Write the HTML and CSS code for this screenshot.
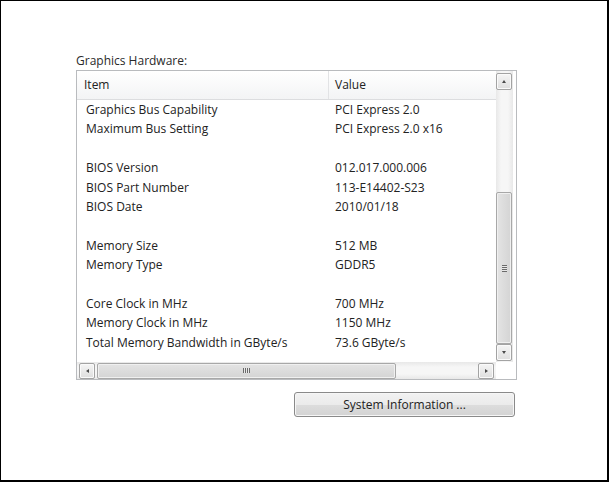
FILE: index.html
```html
<!DOCTYPE html>
<html>
<head>
<meta charset="utf-8">
<link rel="stylesheet" href="styles.css">
</head>
<body>
<div class="frame">
  <div class="group">
    <div class="heading">Graphics Hardware:</div>
    <div class="listbox">
      <div class="list">
        <div class="header">
          <div class="hcell c1">Item</div>
          <div class="hcell c2">Value</div>
          <div class="hcell c3"></div>
        </div>
        <div class="rows">
          <div class="row"><span class="c1">Graphics Bus Capability</span><span class="c2">PCI Express 2.0</span></div>
          <div class="row"><span class="c1">Maximum Bus Setting</span><span class="c2">PCI Express 2.0 x16</span></div>
          <div class="row"><span class="c1"></span><span class="c2"></span></div>
          <div class="row"><span class="c1">BIOS Version</span><span class="c2">012.017.000.006</span></div>
          <div class="row"><span class="c1">BIOS Part Number</span><span class="c2">113-E14402-S23</span></div>
          <div class="row"><span class="c1">BIOS Date</span><span class="c2">2010/01/18</span></div>
          <div class="row"><span class="c1"></span><span class="c2"></span></div>
          <div class="row"><span class="c1">Memory Size</span><span class="c2">512 MB</span></div>
          <div class="row"><span class="c1">Memory Type</span><span class="c2">GDDR5</span></div>
          <div class="row"><span class="c1"></span><span class="c2"></span></div>
          <div class="row"><span class="c1">Core Clock in MHz</span><span class="c2">700 MHz</span></div>
          <div class="row"><span class="c1">Memory Clock in MHz</span><span class="c2">1150 MHz</span></div>
          <div class="row"><span class="c1">Total Memory Bandwidth in GByte/s</span><span class="c2">73.6 GByte/s</span></div>
        </div>
      </div>
      <div class="vscroll">
        <div class="sbtn"><span class="arrow up"></span></div>
        <div class="vtrack">
          <div class="vthumb"><span class="vgrip"></span></div>
        </div>
        <div class="sbtn"><span class="arrow down"></span></div>
      </div>
      <div class="hscroll">
        <div class="sbtn"><span class="arrow left"></span></div>
        <div class="htrack">
          <div class="hthumb"><span class="hgrip"></span></div>
        </div>
        <div class="sbtn"><span class="arrow right"></span></div>
      </div>
      <div class="corner"></div>
    </div>
    <div class="actions">
      <button class="btn">System Information ...</button>
    </div>
  </div>
</div>
</body>
</html>
```

FILE: styles.css
```css
html, body {
  margin: 0;
  padding: 0;
  background: #ffffff;
}
body {
  font-family: "Open Sans", "Noto Sans", sans-serif;
  font-size: 12px;
  color: #222;
}
.frame {
  width: 609px;
  height: 482px;
  box-sizing: border-box;
  border-style: solid;
  border-color: #000;
  border-width: 1px 2px 2px 1px;
  padding: 52px 0 0 75px;
}
.group {
  width: 441px;
}
.heading {
  height: 17px;
  line-height: 15px;
  color: #2a2a2a;
}
.listbox {
  box-sizing: border-box;
  width: 441px;
  height: 310px;
  border: 1px solid #b9bbbe;
  display: grid;
  grid-template-columns: 419px 17px;
  grid-template-rows: 291px 17px;
  padding-right: 3px;
  background: #fff;
}
.list {
  overflow: hidden;
  display: flex;
  flex-direction: column;
}
.header {
  height: 28px;
  flex: none;
  display: flex;
  background: linear-gradient(#ffffff, #f3f4f5);
  border-bottom: 1px solid #dcdddf;
}
.hcell {
  line-height: 28px;
  box-sizing: border-box;
}
.hcell.c1 {
  width: 252px;
  padding-left: 7px;
  border-right: 1px solid #e2e3e5;
}
.hcell.c2 {
  width: 167px;
  padding-left: 6px;
}
.hcell.c3 {
  flex: 1;
}
.rows {
  display: flex;
  flex-direction: column;
}
.row {
  height: 19.4px;
  line-height: 19.4px;
  display: flex;
  white-space: nowrap;
}
.row .c1 {
  width: 252px;
  padding-left: 9px;
  box-sizing: border-box;
}
.row .c2 {
  padding-left: 6px;
}
.vscroll {
  display: flex;
  flex-direction: column;
  padding: 2px 0 1px;
  background: linear-gradient(90deg, #e8e8e8, #f6f6f6 30%, #f6f6f6 70%, #e8e8e8);
}
.sbtn {
  box-sizing: border-box;
  width: 16px;
  height: 16px;
  flex: none;
  border: 1px solid #a3a3a3;
  border-radius: 2px;
  background: linear-gradient(#f5f5f5, #dedede);
  display: flex;
  align-items: center;
  justify-content: center;
  box-shadow: inset 0 0 0 1px #fafafa;
}
.vscroll .sbtn {
  height: 17px;
}
.arrow {
  width: 0;
  height: 0;
  border: 2px solid transparent;
}
.arrow.up { border-bottom: 3px solid #4a4a4a; border-top: 0; }
.arrow.down { border-top: 3px solid #4a4a4a; border-bottom: 0; }
.arrow.left { border-right: 3px solid #4a4a4a; border-left: 0; }
.arrow.right { border-left: 3px solid #4a4a4a; border-right: 0; }
.vtrack {
  flex: 1;
  display: flex;
  flex-direction: column;
  justify-content: flex-end;
}
.vthumb {
  box-sizing: border-box;
  height: 152px;
  width: 16px;
  border: 1px solid #a8a8a8;
  border-radius: 2px;
  background: linear-gradient(90deg, #e4e4e4, #d4d4d4);
  box-shadow: inset 0 0 0 1px #f0f0f0;
  display: flex;
  align-items: center;
  justify-content: center;
}
.vgrip {
  width: 5px;
  height: 7px;
  background: repeating-linear-gradient(#6a6a6a 0 1px, #e8e8e8 1px 2px);
}
.hscroll {
  display: flex;
  align-items: center;
  padding: 0 2px 0 2px;
  background: linear-gradient(#e8e8e8, #f6f6f6 30%, #f6f6f6 70%, #e8e8e8);
}
.hscroll .sbtn {
  width: 16px;
  height: 16px;
}
.htrack {
  flex: 1;
  height: 16px;
  display: flex;
  padding-left: 2px;
}
.hthumb {
  box-sizing: border-box;
  width: 299px;
  height: 16px;
  border: 1px solid #a8a8a8;
  border-radius: 2px;
  background: linear-gradient(#e4e4e4, #d4d4d4);
  box-shadow: inset 0 0 0 1px #f0f0f0;
  display: flex;
  align-items: center;
  justify-content: center;
}
.hgrip {
  width: 7px;
  height: 5px;
  background: repeating-linear-gradient(90deg, #6a6a6a 0 1px, #e8e8e8 1px 2px);
}
.corner {
  background: #fff;
}
.actions {
  display: flex;
  justify-content: flex-end;
  margin-top: 12px;
  padding-right: 2px;
}
.btn {
  box-sizing: border-box;
  width: 221px;
  height: 25px;
  font-family: "Open Sans", "Noto Sans", sans-serif;
  font-size: 12px;
  color: #222;
  border: 1px solid #8a8a8a;
  border-radius: 3px;
  background: linear-gradient(#f2f2f2, #ebebeb 50%, #dddddd 50%, #d3d3d3);
  box-shadow: inset 0 0 0 1px #f6f6f6;
  padding: 0;
  line-height: 22px;
}
```
